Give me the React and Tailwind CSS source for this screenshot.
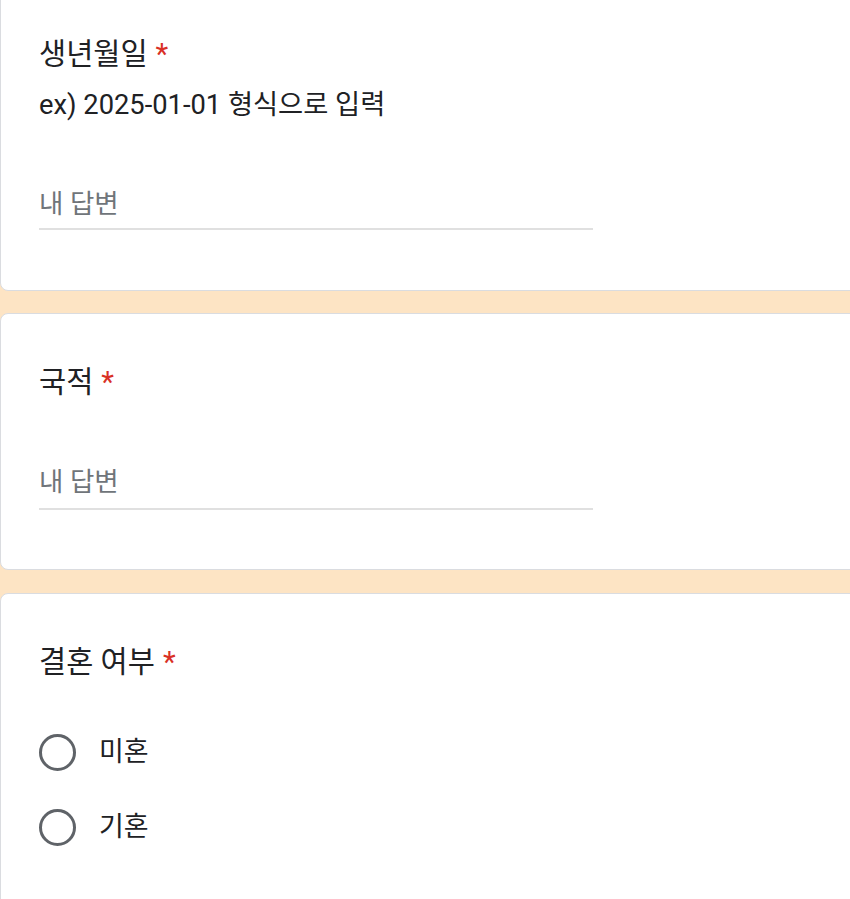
import React from 'react';

const font = { fontFamily: "Roboto, 'Noto Sans CJK KR', sans-serif" };

function Title({ children }) {
  return (
    <div className="text-[29.5px] leading-[36px] text-[#202124]">
      {children}
      <span className="text-[#d93025] pl-[8px]">*</span>
    </div>
  );
}

function TextAnswer({ className, lineGap = 'mt-[8px]' }) {
  return (
    <div className={'w-[554px] ' + className}>
      <div className="text-[26.5px] leading-[36px] text-[#70757a]">내 답변</div>
      <div className={'h-[2px] bg-[#e0e0e0] ' + lineGap} />
    </div>
  );
}

function Radio({ label }) {
  return (
    <div className="flex items-center h-[48px]">
      <div className="w-[37px] h-[37px] rounded-full border-[3px] border-[#5f6368] shrink-0" />
      <span className="ml-[23px] text-[27px] leading-[36px] text-[#202124]">{label}</span>
    </div>
  );
}

export default function App() {
  return (
    <div className="w-[850px] h-[899px] overflow-hidden bg-[#fde4c4]" style={font}>
      <div className="-mt-[15px] flex flex-col gap-[22px] w-[880px]">
        <div className="bg-white border border-[#dadce0] rounded-[8px] px-[38px] pt-[50px] pb-[60px]">
          <Title>생년월일</Title>
          <div className="mt-[15px] text-[27.3px] leading-[36px] text-[#202124]">
            ex) 2025-01-01 형식으로 입력
          </div>
          <TextAnswer className="mt-[63px]" lineGap="mt-[6px]" />
        </div>

        <div className="bg-white border border-[#dadce0] rounded-[8px] px-[38px] pt-[50px] pb-[59px]">
          <Title>국적</Title>
          <TextAnswer className="mt-[64px]" />
        </div>

        <div className="mt-[1px] bg-white border border-[#dadce0] rounded-[8px] px-[38px] pt-[50px] pb-[80px]">
          <Title>결혼 여부</Title>
          <div className="mt-[48px] flex flex-col gap-[27px]">
            <Radio label="미혼" />
            <Radio label="기혼" />
          </div>
        </div>
      </div>
    </div>
  );
}
